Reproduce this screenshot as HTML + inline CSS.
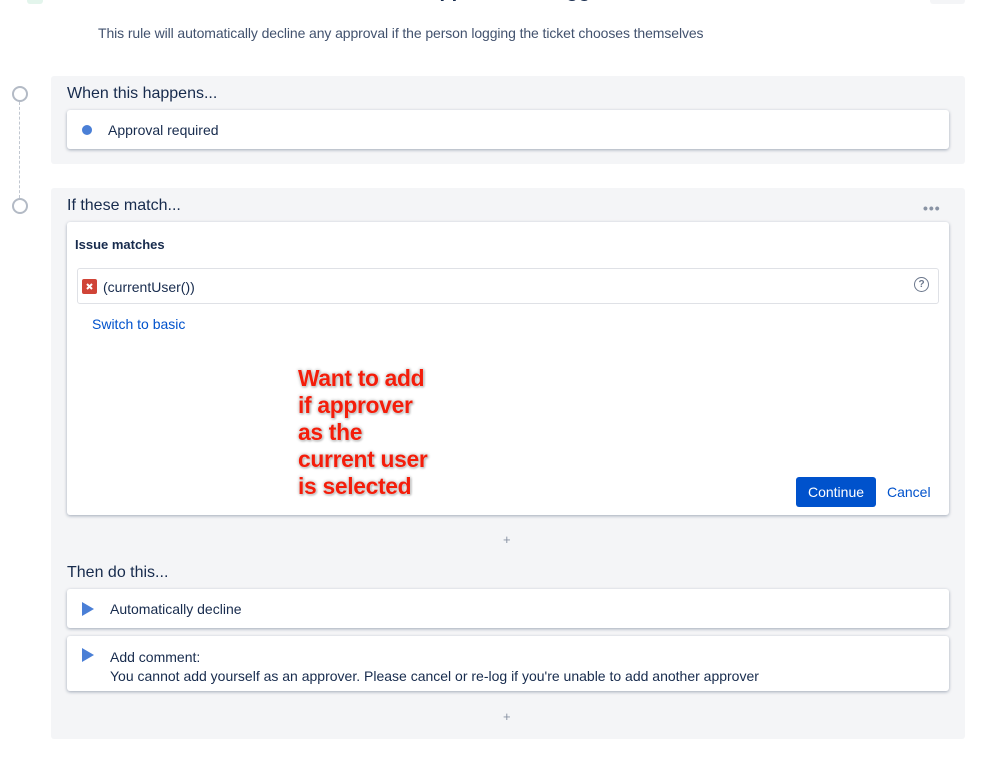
<!DOCTYPE html>
<html><head><style>
body{margin:0;width:999px;height:760px;background:#fff;font-family:"Liberation Sans",sans-serif;color:#172b4d;position:relative;overflow:hidden}
.a{position:absolute}
.panel{position:absolute;left:51px;width:914px;background:#f4f5f7;border-radius:3px}
.card{position:absolute;left:67px;width:882px;background:#fff;border-radius:3px;box-shadow:0 1px 3px rgba(9,30,66,.35)}
.circ{position:absolute;left:12px;width:12px;height:12px;border:2px solid #b3bac5;border-radius:50%;background:#fff}
.h{position:absolute;left:67px;font-size:16px;color:#172b4d}
.t{font-size:14px}
.tri{position:absolute;width:0;height:0;border-left:12px solid #4a7fd6;border-top:7px solid transparent;border-bottom:7px solid transparent}
.red{font-family:"Liberation Sans",sans-serif;font-weight:bold;font-size:22.8px;line-height:27px;color:#f41d0a;text-shadow:0 0 2px #fff,0 0 3px #999,1px 1px 2px #aaa;letter-spacing:-0.3px}
</style></head><body>
<div class="a" style="left:27px;top:-8px;width:16px;height:12px;background:#e3f5ec;border-radius:3px"></div>
<div class="a" style="left:930px;top:-8px;width:35px;height:12px;background:#f4f5f7;border-radius:3px"></div>
<div class="a" style="left:425px;top:-20px;font-size:20px;font-weight:bold;color:#172b4d">Approver is Logger</div>
<div class="a" style="left:98px;top:25px;color:#42526e;font-size:14px;letter-spacing:-0.1px">This rule will automatically decline any approval if the person logging the ticket chooses themselves</div>
<div class="a" style="left:19px;top:102px;height:96px;border-left:1px dashed #c1c7d0"></div>
<div class="circ" style="top:86px"></div>
<div class="circ" style="top:198px"></div>

<div class="panel" style="top:76px;height:88px"></div>
<div class="h" style="top:85px">When this happens...</div>
<div class="card" style="top:110px;height:39px"></div>
<div class="a" style="left:82px;top:125px;width:10px;height:10px;border-radius:50%;background:#4a7fd6"></div>
<div class="a t" style="left:108px;top:122px">Approval required</div>

<div class="panel" style="top:188px;height:551px"></div>
<div class="h" style="top:197px">If these match...</div>
<div class="a" style="left:923px;top:200px;color:#8993a4;font-size:14px;letter-spacing:1px;font-weight:bold">•••</div>
<div class="card" style="top:222px;height:293px"></div>
<div class="a" style="left:75px;top:237px;font-size:13px;font-weight:bold">Issue matches</div>
<div class="a" style="left:77px;top:268px;width:860px;height:34px;border:1px solid #dfe1e6;border-radius:3px;background:#fff"></div>
<div class="a" style="left:82px;top:279px;width:15px;height:15px;background:#d04437;border-radius:2px"><svg width="15" height="15"><path d="M5 5L10 10M10 5L5 10" stroke="#fff" stroke-width="2"/></svg></div>
<div class="a t" style="left:103px;top:279px">(currentUser())</div>
<div class="a" style="left:914px;top:277px;width:13px;height:13px;border:1.5px solid #6b778c;border-radius:50%;font-size:10px;color:#6b778c;text-align:center;line-height:13px;font-weight:bold">?</div>
<div class="a t" style="left:92px;top:316px;color:#0052cc">Switch to basic</div>
<div class="a red" style="left:298px;top:365px">Want to add<br>if approver<br>as the<br>current user<br>is selected</div>
<div class="a t" style="left:796px;top:477px;width:80px;height:30px;background:#0052cc;color:#fff;border-radius:3px;text-align:center;line-height:30px">Continue</div>
<div class="a t" style="left:887px;top:484px;color:#0052cc">Cancel</div>
<div class="a" style="left:503px;top:532px;color:#8993a4;font-size:13px">+</div>

<div class="h" style="top:564px">Then do this...</div>
<div class="card" style="top:589px;height:39px"></div>
<div class="tri" style="left:82px;top:602px"></div>
<div class="a t" style="left:110px;top:601px">Automatically decline</div>
<div class="card" style="top:636px;height:55px"></div>
<div class="tri" style="left:82px;top:648px"></div>
<div class="a t" style="left:110px;top:648px;line-height:19px">Add comment:<br>You cannot add yourself as an approver. Please cancel or re-log if you're unable to add another approver</div>
<div class="a" style="left:503px;top:709px;color:#8993a4;font-size:13px">+</div>
</body></html>
